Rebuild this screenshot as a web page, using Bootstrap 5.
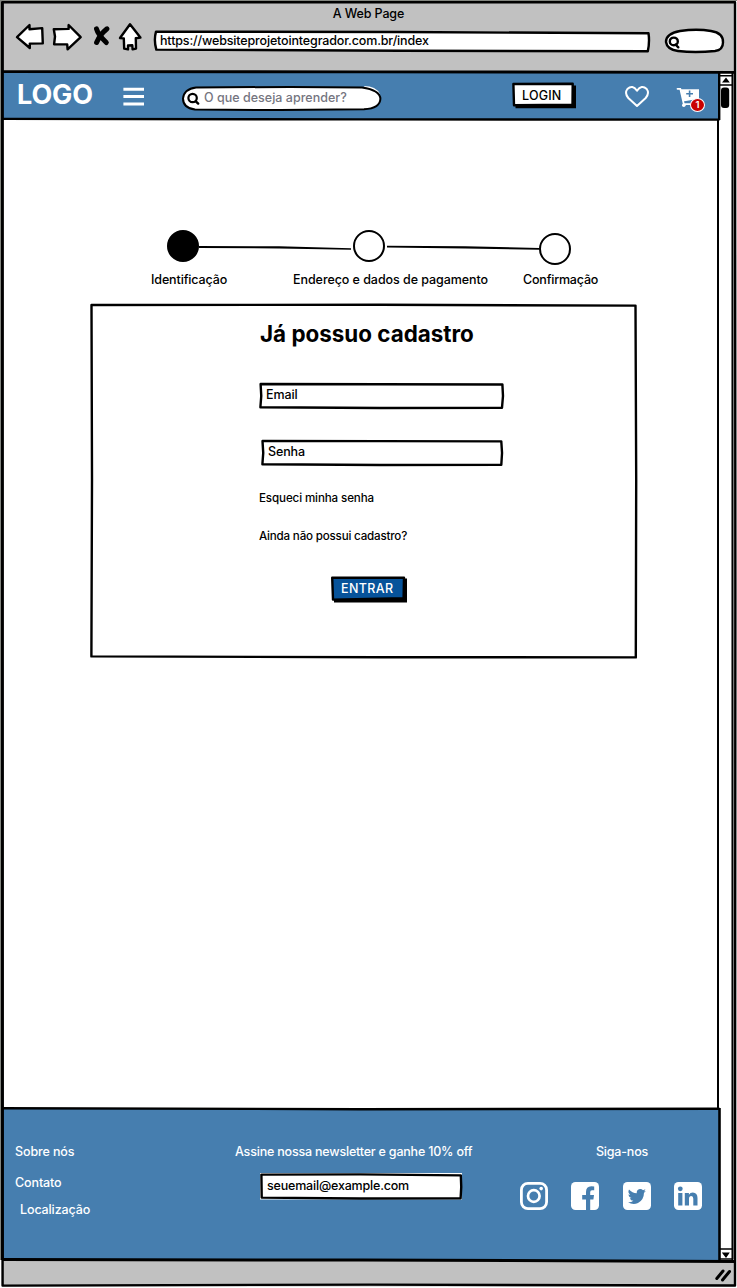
<!DOCTYPE html>
<html lang="pt-BR">
<head>
<meta charset="utf-8">
<meta name="viewport" content="width=device-width, initial-scale=1">
<title>A Web Page</title>
<link href="https://cdn.jsdelivr.net/npm/bootstrap@5.3.0/dist/css/bootstrap.min.css" rel="stylesheet">
<style>
  body { font: 500 12.5px/16px "Inter", "Liberation Sans", sans-serif; letter-spacing: -.12px; color: #000; background: #fff; margin: 0; }
  svg { display: block; flex: none; overflow: visible; }
  .window { width: 737px; height: 1288px; overflow: hidden; }
  .ink { fill: none; stroke: #000; stroke-width: 2.4; stroke-linejoin: round; stroke-linecap: round; }
  .sketch { position: absolute; inset: 0; z-index: 0; }
  .sketch + * { position: relative; z-index: 1; }
  .chrome { height: 71px; background: #c1c1c1; padding-top: 6px; }
  .toolbar { height: 34px; }
  .url { width: 496px; height: 22px; margin: 8px 0 0 11px; padding: 3px 0 0 6px; }
  .url span { letter-spacing: -.15px; }
  .chrome-search { width: 60px; height: 25px; margin: 7px 0 0 15px; }
  .page { width: 720px; }
  .topnav { height: 49px; background: #467eaf; }
  .brand { width: 106px; margin: 8px 0 0 17px; font-size: 27px; line-height: 32px; letter-spacing: -.1px; color: #fff; font-weight: 700; }
  .searchbox { width: 200px; height: 26px; margin: 14px 0 0 37px; }
  .searchbox span { padding: 5px 0 0 22px; color: #75757f; letter-spacing: .02px; }
  .login { width: 65px; height: 27px; margin: 11px 0 0 130px; padding: 6px 0 0 10px; }
  .login span { letter-spacing: .2px; }
  .main { height: 988px; padding-top: 110px; }
  .steps { margin-left: 167px; }
  .dot { width: 32px; height: 32px; border: 2px solid #000; border-radius: 50%; flex: none; }
  .dot.done { background: #000; }
  .steplabels { margin: 7px 0 0 151px; }
  .steplabels span { white-space: nowrap; }
  .panel { width: 547px; height: 354px; margin: 16px 0 0 90px; padding: 16px 0 0 170px; }
  .panel h1 { font-size: 22.4px; line-height: 28px; font-weight: 700; margin: 0; letter-spacing: 0; }
  .field { height: 26px; padding: 4px 0 0 6px; }
  .hint { font-size: 11.6px; margin-left: -1px; }
  .enter { width: 77px; height: 28px; color: #fff; padding: 5px 0 0 10px; }
  .enter span { letter-spacing: .4px; }
  .foot { height: 152px; background: #467eaf; color: #fff; padding-top: 36px; }
  .foot .about { width: 220px; padding-left: 15px; }
  .foot .news { width: 285px; padding-left: 15px; }
  .news p { letter-spacing: -.2px; }
  .news .field { width: 202px; margin: 13px 0 0 25px; color: #000; padding: 5px 0 0 7px; }
  .scroller { width: 17px; background: #fff; }
  .status { height: 28px; background: #c1c1c1; }
  .frame { position: absolute; left: 0; top: 0; z-index: 5; pointer-events: none; }
  .count { left: 14px; top: 10.5px; width: 15px; height: 14px; border-radius: 50%; background: #c90000; border: 1.6px solid #fff; color: #fff; font-size: 9.5px; line-height: 11px; text-align: center; font-weight: 600; }
</style>
</head>
<body>
<div class="window position-relative d-flex flex-column">

  <header class="chrome">
    <div class="text-center">A Web Page</div>
    <div class="toolbar d-flex align-items-start">
      <svg class="ms-3" width="127" height="34" viewBox="16 22 127 34">
        <g class="ink" style="fill:#fff">
          <path d="M17 37.2L29.5 25V29.3L42.2 28.1L42.8 43.4L29.8 43.6V48Z"/>
          <path d="M80.7 37.2L68.6 25V28.9L53.8 29.2L55 36.5L54.1 44.2L67.2 44.4L67.6 49.3Z"/>
          <path d="M130 24.2L120 38L123.8 38.4L124.2 48.6L128 49.4V45.5L132.3 45.3L132.6 49.4L136 48.6L135.8 38.2L140.4 37.6Z"/>
        </g>
        <path d="M96.5 28.8Q98 34.5 106.3 42.5M107 28.8Q100 34.5 96.6 42.5" fill="none" stroke="#000" stroke-width="5" stroke-linecap="round"/>
      </svg>
      <div class="url position-relative">
        <svg class="sketch" width="496" height="22" viewBox="154 30 496 22"><path class="ink" style="fill:#fff" d="M156 31.6L400 32L648.5 33.3Q649.8 42 647.8 51.3L400 50.7L156.3 49.6Q153.6 40 156 31.6Z"/></svg>
        <span>https://websiteprojetointegrador.com.br/index</span>
      </div>
      <svg class="chrome-search" viewBox="665 29 60 25">
        <path class="ink" style="fill:#fff" d="M680 31Q697 28.5 711 31Q723.5 33 723 42.5Q723 50 715 51Q695 53 678 51Q667 49.5 666 42Q666 33.5 680 31Z"/>
        <ellipse cx="673.8" cy="41.4" rx="4" ry="3.8" class="ink"/><path class="ink" d="M675.5 44.5L678.3 47.3"/>
      </svg>
    </div>
  </header>

  <div class="d-flex flex-grow-1">
    <div class="page d-flex flex-column">

      <nav class="topnav d-flex align-items-start">
        <div class="brand">LOGO</div>
        <svg width="22" height="18" viewBox="0 0 22 18" style="margin-top:16px"><path d="M.4 2.2H21M.4 9.6H21M.4 17H21" stroke="#fff" stroke-width="3"/></svg>
        <div class="searchbox position-relative">
          <svg class="sketch" width="200" height="26" viewBox="182 85 200 26">
            <path d="M364 86Q376 86 380 94L366 90Z" fill="#fff"/>
            <path class="ink" style="fill:#fff;stroke-width:2" d="M196 87.5L290 86.9L362 87.4Q380 90 380.4 98.8Q380 108.5 364 109.3L280 110L195 109.6Q183 108 183 98.5Q184 89 196 87.5Z"/>
            <circle cx="192.6" cy="98" r="4.2" class="ink" style="stroke-width:2.2"/><path class="ink" d="M195.8 101.3L198.2 103.6"/>
          </svg>
          <span class="d-block">O que deseja aprender?</span>
        </div>
        <div class="login position-relative">
          <svg class="sketch" width="65" height="27" viewBox="512 82 65 27">
            <path d="M516 85.5H576V108.3H515.5Z"/>
            <path class="ink" style="fill:#fff" d="M513.4 84L572.7 83.7L572.5 104.8L514 105.2Z"/>
          </svg>
          <span>LOGIN</span>
        </div>
        <svg width="25" height="22" viewBox="625 86 25 22" style="margin:15px 0 0 48px"><path d="M637 106L628.3 98Q624.2 93 627.4 89Q632.5 84.2 637 90.8Q641.6 84.2 646.7 89Q649.8 93 645.7 98Z" fill="none" stroke="#fff" stroke-width="2" stroke-linejoin="round"/></svg>
        <div class="position-relative" style="margin:16px 0 0 26px">
          <svg width="26" height="22" viewBox="676 87 26 22">
            <path d="M677.5 88.8H680.3L683.8 104.2H696" fill="none" stroke="#fff" stroke-width="1.8" stroke-linecap="round"/>
            <path d="M680.8 89.3H699V98.8L683 101.4Z" fill="#fff"/>
            <path d="M689.6 90.6V97M686.2 93.8H693" stroke="#467eaf" stroke-width="1.6"/>
            <circle cx="683.8" cy="105.3" r="1.8" fill="#fff"/>
          </svg>
          <span class="count position-absolute">1</span>
        </div>
      </nav>

      <main class="main">
        <div class="steps d-flex align-items-start">
          <div class="dot done"></div>
          <svg width="154" height="32"><path d="M0 16L80 16.3L152 18.2V19.8L80 18.5L0 18Z"/></svg>
          <div class="dot"></div>
          <svg width="154" height="32"><path d="M2 15.8L80 16.2L154 18V19.8L80 18.5L2 17.4Z"/></svg>
          <div class="dot" style="margin-top:3px"></div>
        </div>
        <div class="steplabels d-flex">
          <span style="width:142px">Identificação</span>
          <span style="width:230px;letter-spacing:-.06px">Endereço e dados de pagamento</span>
          <span style="letter-spacing:-.2px">Confirmação</span>
        </div>

        <section class="panel position-relative">
          <svg class="sketch" width="547" height="354" viewBox="90 304 547 354"><path class="ink" d="M91.5 305L380 304.8L635.5 305.6L636.2 480L635.8 657.4L380 657.2L91.4 656.4L92 480Z"/></svg>
          <div>
            <h1>Já possuo cadastro</h1>
            <div class="field position-relative" style="width:244px;margin-top:35px">
              <svg class="sketch" width="244" height="26" viewBox="260 383 244 26"><path class="ink" d="M260.6 384L380 384.2L502.4 384.5Q503.8 396 502 407.8L380 408L260.4 407.2Q262 396 260.6 384Z"/></svg>
              <span>Email</span>
            </div>
            <div class="field position-relative" style="width:242px;margin:31px 0 0 2px">
              <svg class="sketch" width="242" height="26" viewBox="262 440 242 26"><path class="ink" d="M262.5 441L380 441.1L501.3 441.4Q502.8 453 501.3 464.9L380 465L262.4 464.2Q264 453 262.5 441Z"/></svg>
              <span>Senha</span>
            </div>
            <div class="hint" style="margin-top:24px">Esqueci minha senha</div>
            <div class="hint" style="margin-top:22px;letter-spacing:-.19px">Ainda não possui cadastro?</div>
            <div class="enter position-relative" style="margin:32px 0 0 71px">
              <svg class="sketch" width="77" height="28" viewBox="331 576 77 28">
                <path d="M334 578.5H407V602.6H334Z"/>
                <path class="ink" style="fill:#07539a" d="M332.2 577.8L404 577.8L403.6 598.3L333 599.6Z"/>
              </svg>
              <span>ENTRAR</span>
            </div>
          </div>
        </section>
      </main>

      <footer class="foot d-flex align-items-start">
        <div class="about">
          <div>Sobre nós</div>
          <div style="margin-top:15px">Contato</div>
          <div style="margin:11px 0 0 5px">Localização</div>
        </div>
        <div class="news">
          <p class="m-0">Assine nossa newsletter e ganhe 10% off</p>
          <div class="field position-relative">
            <svg class="sketch" width="202" height="26" viewBox="260 1173 202 26"><path fill="#fff" d="M260 1173H462V1199.5H260Z"/><path class="ink" d="M261.4 1174.6L360 1174.4L460.8 1175.4Q461.8 1187 460.6 1198.4L360 1198.5L261.7 1197.6Z"/></svg>
            <span style="letter-spacing:-.19px">seuemail@example.com</span>
          </div>
        </div>
        <div>
          <div style="padding-left:91px;letter-spacing:-.2px">Siga-nos</div>
          <div class="d-flex" style="margin:22px 0 0 15px;gap:23.3px">
            <svg width="28" height="28" viewBox="0 0 28 28" fill="none" stroke="#fff"><rect x="1.4" y="1.4" width="25.2" height="25.2" rx="6.5" stroke-width="2.8"/><circle cx="13.8" cy="14" r="5.8" stroke-width="2.7"/><circle cx="21.2" cy="6.6" r="1.8" fill="#fff" stroke="none"/></svg>
            <svg width="28" height="28" viewBox="0 0 28 28"><rect width="28" height="28" rx="4.5" fill="#fff"/><path fill="#467eaf" d="M15 28V17.4H11.2V13H15V10Q15 4.4 20.3 4.3L23.2 4.5V8.3H21Q19.2 8.3 19.2 10.3V13H23L22.4 17.4H19.2V28Z"/></svg>
            <svg width="28" height="28" viewBox="0 0 28 28"><rect width="28" height="28" rx="4.5" fill="#fff"/><path fill="#467eaf" d="M22.8 8.7Q21.9 9.2 20.8 9.3Q22 8.6 22.4 7.3Q21.2 8 20 8.2Q18.6 6.8 16.8 7.1Q13.6 7.7 13.7 11.3Q9.2 11.1 6 7.6Q4.4 10.8 7.2 12.7Q6.2 12.7 5.5 12.2Q5.6 15.2 8.6 16.1Q7.7 16.3 6.8 16.2Q7.7 18.7 10.4 18.8Q8.1 20.5 5 20.3Q10 23.2 15 21Q20.9 18 21 10.8Q22.1 10 22.8 8.7Z"/></svg>
            <svg width="28" height="28" viewBox="0 0 28 28"><rect width="28" height="28" rx="4.5" fill="#fff"/><g fill="#467eaf"><circle cx="6.3" cy="6.8" r="2.4"/><path d="M4.2 10.9H8.4V23.4H4.2ZM10.8 10.9H14.9V12.7Q16.2 10.6 18.8 10.6Q23.5 10.7 23.5 16.1V23.4H19.3V16.7Q19.3 14 17.3 14Q15 14.1 15 16.8V23.4H10.8Z"/></g></svg>
          </div>
        </div>
      </footer>
    </div>
    <div class="scroller"></div>
  </div>

  <div class="status"></div>

  <!-- hand-drawn window outline, bar rules and scrollbar -->
  <svg class="frame" width="737" height="1288" viewBox="0 0 737 1288">
    <path d="M0 0H737V1.2H0ZM0 1H1.6V1260H0Z" fill="#82857f"/>
    <path d="M0 1260H1.5V1288H0ZM0 1286.6H737V1288H0ZM736 1H737V1288H736Z" fill="#fff"/>
    <path d="M731.8 73H735V1259H731.8Z" fill="#a9aaa9"/>
    <g class="ink" style="stroke-linecap:butt">
      <path d="M2.2 2.2H735L735.4 600L735 1285.5L370 1284.6L2.6 1285.6Z"/>
      <path d="M2.2 71.6L360 71.8L735 72.3" style="stroke-width:2.8"/>
      <path d="M2 118.9L360 119.4L719.5 119.6"/>
      <path d="M719.2 71V120"/>
      <path d="M718 119V1110" style="stroke-width:2"/>
      <path d="M719.5 1108V1260" style="stroke-width:2.6"/>
      <path d="M732.4 73V1260" style="stroke-width:1.8"/>
      <path d="M2 1108.2L360 1109.2L719.5 1108.8"/>
      <path d="M2 1259.6L360 1260L735 1261.4" style="stroke-width:3"/>
      <path d="M2.4 2V1260" style="stroke-width:2.8"/>
      <path d="M720 75.8H732M720 85H732M720 1249H732M720 1259H732" style="stroke-width:1.5"/>
    </g>
    <path d="M722 82.5L726 77.5L729.8 82.5ZM721.8 1252.5H729.8L726 1258Z"/>
    <rect x="721" y="87.5" width="8.2" height="20.5" rx="3"/>
    <path d="M716.8 1278.5L723 1271M722.5 1280L729.5 1271.5" stroke="#000" stroke-width="3" stroke-linecap="round"/>
  </svg>
</div>
<script src="https://cdn.jsdelivr.net/npm/bootstrap@5.3.0/dist/js/bootstrap.bundle.min.js"></script>
</body>
</html>
